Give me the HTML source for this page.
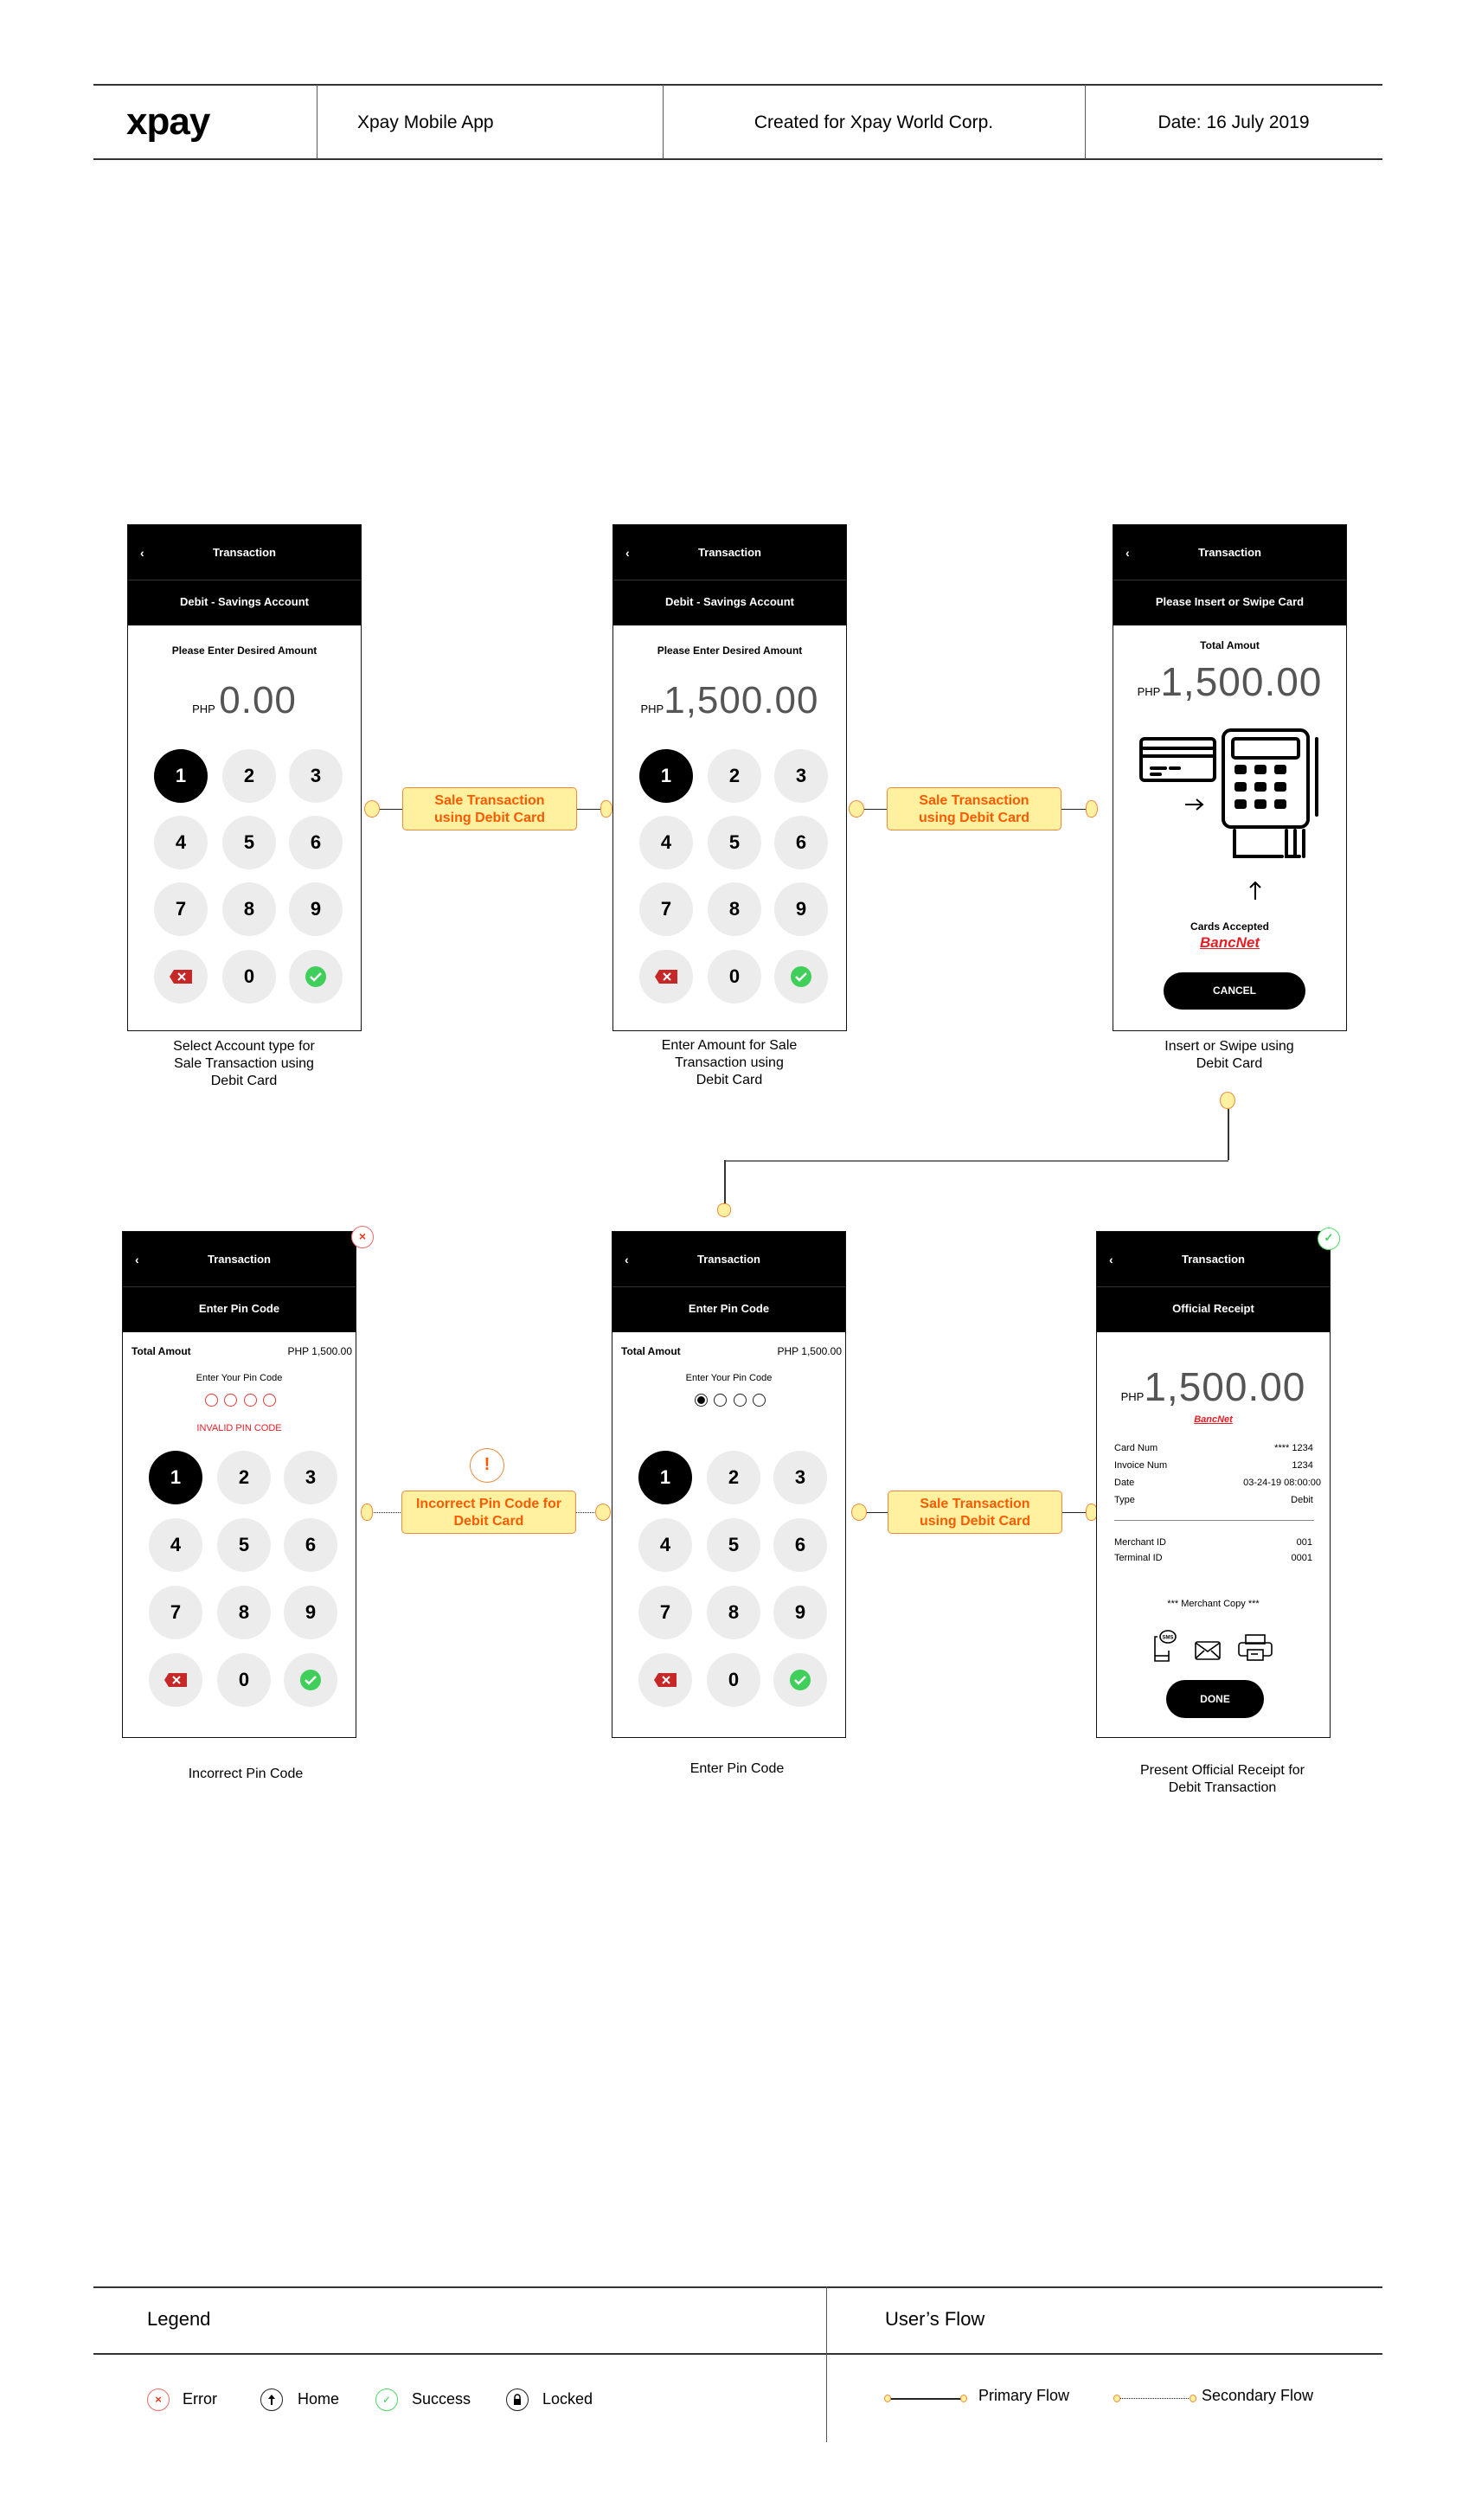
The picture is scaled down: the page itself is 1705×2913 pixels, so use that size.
<!DOCTYPE html>
<html><head><meta charset="utf-8">
<style>
*{box-sizing:border-box;margin:0;padding:0}
body{width:1705px;height:2913px;background:#fff;position:relative;font-family:"Liberation Sans",sans-serif;color:#000;overflow:hidden}
.a{position:absolute}
.hl{position:absolute;height:2px;background:#333}
.vl{position:absolute;width:1px;background:#555}
.ph{position:absolute;width:271px;height:586px;border:1.5px solid #111;background:#fff;overflow:hidden}
.tb{position:absolute;left:0;top:0;width:100%;height:64px;background:#000;color:#fff;font-weight:bold;font-size:13px;text-align:center;line-height:64px;border-bottom:1px solid #333}
.tb i{position:absolute;left:14px;top:0;font-style:normal;font-size:14px}
.sb{position:absolute;left:0;top:64px;width:100%;height:52px;background:#000;color:#fff;font-weight:bold;font-size:13px;text-align:center;line-height:50px}
.c{position:absolute;left:0;width:100%;text-align:center}
.k{position:absolute;width:62px;height:62px;margin:-31px 0 0 -31px;border-radius:50%;background:#ececec;font-weight:bold;font-size:22px;display:flex;align-items:center;justify-content:center}
.k.b{background:#000;color:#fff}
.lbl{position:absolute;width:300px;text-align:center;font-size:16px;line-height:20px}
.box{position:absolute;width:202px;height:50px;background:#fff1a0;border:1.5px solid #f08a3a;border-radius:5px;color:#ff5a00;font-size:16px;font-weight:bold;text-align:center;line-height:20px;padding-top:5px}
.dot{position:absolute;width:18px;height:20px;border-radius:50%;background:#fff1a0;border:1.5px solid #f08a3a;margin:-10px 0 0 -9px}
.ln{position:absolute;height:1px;background:#222}
.dl{position:absolute;height:0;border-top:1.5px dotted #222}
.pin{position:absolute;width:15px;height:15px;border-radius:50%;border:1.2px solid #e53935;margin:-7px 0 0 -7px}
.pb{border-color:#222}
.sm{font-size:12px}
.amt{font-size:44px;color:#555;letter-spacing:1px}
</style></head><body>

<div class="hl" style="left:108px;top:97px;width:1490px"></div>
<div class="hl" style="left:108px;top:183px;width:1490px"></div>
<div class="vl" style="left:366px;top:98px;height:86px"></div>
<div class="vl" style="left:766px;top:98px;height:86px"></div>
<div class="vl" style="left:1254px;top:98px;height:86px"></div>
<div class="a" style="left:146px;top:116px;font-size:44px;font-weight:bold;letter-spacing:-1px">xpay</div>
<div class="a" style="left:413px;top:130px;font-size:21px">Xpay Mobile App</div>
<div class="a" style="left:766px;width:488px;top:130px;font-size:21px;text-align:center">Created for Xpay World Corp.</div>
<div class="a" style="left:1254px;width:344px;top:130px;font-size:21px;text-align:center">Date: 16 July 2019</div>

<!-- PHONE 1 -->
<div class="ph" style="left:147px;top:606px">
 <div class="tb"><i>&lsaquo;</i>Transaction</div>
 <div class="sb">Debit - Savings Account</div>
 <div class="c sm" style="top:138px;font-weight:bold">Please Enter Desired Amount</div>
 <div class="c" style="top:178px"><span style="font-size:13px">PHP</span> <span class="amt">0.00</span></div>
 <div class="k b" style="left:61px;top:290px">1</div><div class="k" style="left:140px;top:290px">2</div><div class="k" style="left:217px;top:290px">3</div>
 <div class="k" style="left:61px;top:367px">4</div><div class="k" style="left:140px;top:367px">5</div><div class="k" style="left:217px;top:367px">6</div>
 <div class="k" style="left:61px;top:444px">7</div><div class="k" style="left:140px;top:444px">8</div><div class="k" style="left:217px;top:444px">9</div>
 <div class="k" style="left:61px;top:522px"><svg width="28" height="18"><path d="M6 1H27V17H6L1 9Z" fill="#c62828"/><path d="M11 5l8 8M19 5l-8 8" stroke="#fff" stroke-width="2"/></svg></div>
 <div class="k" style="left:140px;top:522px">0</div>
 <div class="k" style="left:217px;top:522px"><svg width="26" height="26"><circle cx="13" cy="13" r="12" fill="#3fcf5a"/><path d="M7 13l4 4 8-8" stroke="#fff" stroke-width="2.5" fill="none"/></svg></div>
</div>
<div class="lbl" style="left:132px;top:1200px">Select Account type for<br>Sale Transaction using<br>Debit Card</div>

<div class="ln" style="left:430px;top:935px;width:275px"></div>
<div class="dot" style="left:430px;top:935px"></div>
<div class="dot" style="left:703px;top:935px;border-radius:50% 60% 60% 50%;width:14px"></div>
<div class="box" style="left:465px;top:910px">Sale Transaction<br>using Debit Card</div>

<!-- PHONE 2 -->
<div class="ph" style="left:708px;top:606px">
 <div class="tb"><i>&lsaquo;</i>Transaction</div>
 <div class="sb">Debit - Savings Account</div>
 <div class="c sm" style="top:138px;font-weight:bold">Please Enter Desired Amount</div>
 <div class="c" style="top:178px"><span style="font-size:13px">PHP</span><span class="amt">1,500.00</span></div>
 <div class="k b" style="left:61px;top:290px">1</div><div class="k" style="left:140px;top:290px">2</div><div class="k" style="left:217px;top:290px">3</div>
 <div class="k" style="left:61px;top:367px">4</div><div class="k" style="left:140px;top:367px">5</div><div class="k" style="left:217px;top:367px">6</div>
 <div class="k" style="left:61px;top:444px">7</div><div class="k" style="left:140px;top:444px">8</div><div class="k" style="left:217px;top:444px">9</div>
 <div class="k" style="left:61px;top:522px"><svg width="28" height="18"><path d="M6 1H27V17H6L1 9Z" fill="#c62828"/><path d="M11 5l8 8M19 5l-8 8" stroke="#fff" stroke-width="2"/></svg></div>
 <div class="k" style="left:140px;top:522px">0</div>
 <div class="k" style="left:217px;top:522px"><svg width="26" height="26"><circle cx="13" cy="13" r="12" fill="#3fcf5a"/><path d="M7 13l4 4 8-8" stroke="#fff" stroke-width="2.5" fill="none"/></svg></div>
</div>
<div class="lbl" style="left:693px;top:1199px">Enter Amount for Sale<br>Transaction using<br>Debit Card</div>

<div class="ln" style="left:990px;top:935px;width:275px"></div>
<div class="dot" style="left:990px;top:935px"></div>
<div class="dot" style="left:1264px;top:935px;border-radius:50% 60% 60% 50%;width:14px"></div>
<div class="box" style="left:1025px;top:910px">Sale Transaction<br>using Debit Card</div>

<!-- PHONE 3 -->
<div class="ph" style="left:1286px;top:606px">
 <div class="tb"><i>&lsaquo;</i>Transaction</div>
 <div class="sb">Please Insert or Swipe Card</div>
 <div class="c sm" style="top:132px;font-weight:bold">Total Amout</div>
 <div class="c" style="top:154px"><span style="font-size:13px">PHP</span><span class="amt" style="font-size:46px">1,500.00</span></div>
 <svg class="a" style="left:0;top:225px" width="271" height="215" viewBox="0 0 271 215">
  <g fill="none" stroke="#000" stroke-width="4" stroke-linecap="round">
   <rect x="32" y="22" width="85" height="48" rx="4"/><line x1="32" y1="33" x2="117" y2="33"/><line x1="32" y1="42" x2="117" y2="42"/>
   <line x1="44" y1="56" x2="60" y2="56"/><line x1="66" y1="56" x2="76" y2="56"/><line x1="44" y1="63" x2="54" y2="63"/>
   <rect x="127" y="12" width="98" height="112" rx="9"/><rect x="138" y="22" width="76" height="22" rx="3"/>
   <line x1="235" y1="22" x2="235" y2="110"/>
   <path d="M140 128v30h55M200 128v30h15M210 128v30M220 128v30" />
  </g>
  <g fill="#000"><rect x="140" y="52" width="14" height="11" rx="3"/><rect x="163" y="52" width="14" height="11" rx="3"/><rect x="186" y="52" width="14" height="11" rx="3"/>
   <rect x="140" y="72" width="14" height="11" rx="3"/><rect x="163" y="72" width="14" height="11" rx="3"/><rect x="186" y="72" width="14" height="11" rx="3"/>
   <rect x="140" y="92" width="14" height="11" rx="3"/><rect x="163" y="92" width="14" height="11" rx="3"/><rect x="186" y="92" width="14" height="11" rx="3"/></g>
  <path d="M83 98h20M96 92l7 6-7 6" stroke="#000" stroke-width="2" fill="none"/>
  <path d="M164 208v-20M158 194l6-6 6 6" stroke="#000" stroke-width="2" fill="none"/>
 </svg>
 <div class="c sm" style="top:457px;font-weight:bold">Cards Accepted</div>
 <div class="c" style="top:473px;color:#e51e25;font-weight:bold;font-style:italic;font-size:17px;text-decoration:underline">BancNet</div>
 <div class="a" style="left:58px;top:517px;width:164px;height:43px;border-radius:22px;background:#000;color:#fff;font-size:12px;font-weight:bold;text-align:center;line-height:43px">CANCEL</div>
</div>
<div class="lbl" style="left:1271px;top:1200px">Insert or Swipe using<br>Debit Card</div>

<div class="a" style="left:1419px;top:1281px;width:1.5px;height:60px;background:#333"></div>
<div class="ln" style="left:837px;top:1341px;width:583px;background:#777;height:2px"></div>
<div class="a" style="left:837px;top:1341px;width:1.5px;height:58px;background:#333"></div>
<div class="dot" style="left:1419px;top:1272px"></div>
<div class="dot" style="left:838px;top:1401px;width:16px;height:16px;border-radius:50% 50% 60% 60%"></div>

<!-- PHONE 4 -->
<div class="a" style="left:406px;top:1417px;width:26px;height:26px;border-radius:50%;border:1.5px solid #f06a6a;background:#fff;color:#e53b1b;font-size:14px;font-weight:bold;text-align:center;line-height:22px;z-index:2">×</div>
<div class="ph" style="left:141px;top:1423px">
 <div class="tb"><i>&lsaquo;</i>Transaction</div>
 <div class="sb">Enter Pin Code</div>
 <div class="a sm" style="left:10px;top:131px;font-weight:bold">Total Amout</div>
 <div class="a sm" style="right:4px;top:131px">PHP 1,500.00</div>
 <div class="c" style="top:163px;font-size:11px">Enter Your Pin Code</div>
 <div class="pin" style="left:102px;top:194px"></div><div class="pin" style="left:124px;top:194px"></div><div class="pin" style="left:147px;top:194px"></div><div class="pin" style="left:169px;top:194px"></div>
 <div class="c" style="top:221px;font-size:11px;color:#e51e25">INVALID PIN CODE</div>
 <div class="k b" style="left:61px;top:284px">1</div><div class="k" style="left:140px;top:284px">2</div><div class="k" style="left:217px;top:284px">3</div>
 <div class="k" style="left:61px;top:362px">4</div><div class="k" style="left:140px;top:362px">5</div><div class="k" style="left:217px;top:362px">6</div>
 <div class="k" style="left:61px;top:440px">7</div><div class="k" style="left:140px;top:440px">8</div><div class="k" style="left:217px;top:440px">9</div>
 <div class="k" style="left:61px;top:518px"><svg width="28" height="18"><path d="M6 1H27V17H6L1 9Z" fill="#c62828"/><path d="M11 5l8 8M19 5l-8 8" stroke="#fff" stroke-width="2"/></svg></div>
 <div class="k" style="left:140px;top:518px">0</div>
 <div class="k" style="left:217px;top:518px"><svg width="26" height="26"><circle cx="13" cy="13" r="12" fill="#3fcf5a"/><path d="M7 13l4 4 8-8" stroke="#fff" stroke-width="2.5" fill="none"/></svg></div>
</div>
<div class="lbl" style="left:134px;top:2041px">Incorrect Pin Code</div>

<div class="dl" style="left:424px;top:1748px;width:273px"></div>
<div class="dot" style="left:426px;top:1748px;width:14px;border-radius:60% 50% 50% 60%"></div>
<div class="dot" style="left:697px;top:1748px"></div>
<div class="a" style="left:543px;top:1674px;width:40px;height:40px;border-radius:50%;border:1.5px solid #f08a3a;background:#fff;color:#ff5a00;font-weight:bold;font-size:20px;text-align:center;line-height:37px">!</div>
<div class="box" style="left:464px;top:1723px">Incorrect Pin Code for<br>Debit Card</div>

<!-- PHONE 5 -->
<div class="ph" style="left:707px;top:1423px">
 <div class="tb"><i>&lsaquo;</i>Transaction</div>
 <div class="sb">Enter Pin Code</div>
 <div class="a sm" style="left:10px;top:131px;font-weight:bold">Total Amout</div>
 <div class="a sm" style="right:4px;top:131px">PHP 1,500.00</div>
 <div class="c" style="top:163px;font-size:11px">Enter Your Pin Code</div>
 <div class="pin pb" style="left:102px;top:194px;background:radial-gradient(circle,#000 45%,#fff 50%)"></div><div class="pin pb" style="left:124px;top:194px"></div><div class="pin pb" style="left:147px;top:194px"></div><div class="pin pb" style="left:169px;top:194px"></div>
 <div class="k b" style="left:61px;top:284px">1</div><div class="k" style="left:140px;top:284px">2</div><div class="k" style="left:217px;top:284px">3</div>
 <div class="k" style="left:61px;top:362px">4</div><div class="k" style="left:140px;top:362px">5</div><div class="k" style="left:217px;top:362px">6</div>
 <div class="k" style="left:61px;top:440px">7</div><div class="k" style="left:140px;top:440px">8</div><div class="k" style="left:217px;top:440px">9</div>
 <div class="k" style="left:61px;top:518px"><svg width="28" height="18"><path d="M6 1H27V17H6L1 9Z" fill="#c62828"/><path d="M11 5l8 8M19 5l-8 8" stroke="#fff" stroke-width="2"/></svg></div>
 <div class="k" style="left:140px;top:518px">0</div>
 <div class="k" style="left:217px;top:518px"><svg width="26" height="26"><circle cx="13" cy="13" r="12" fill="#3fcf5a"/><path d="M7 13l4 4 8-8" stroke="#fff" stroke-width="2.5" fill="none"/></svg></div>
</div>
<div class="lbl" style="left:702px;top:2035px">Enter Pin Code</div>

<div class="ln" style="left:993px;top:1748px;width:273px"></div>
<div class="dot" style="left:993px;top:1748px"></div>
<div class="dot" style="left:1264px;top:1748px;border-radius:50% 60% 60% 50%;width:14px"></div>
<div class="box" style="left:1026px;top:1723px">Sale Transaction<br>using Debit Card</div>

<!-- PHONE 6 -->
<div class="a" style="left:1523px;top:1419px;width:26px;height:26px;border-radius:50%;border:1.5px solid #4cd964;background:#fff;color:#3fcf5a;font-size:13px;font-weight:bold;text-align:center;line-height:22px;z-index:2">✓</div>
<div class="ph" style="left:1267px;top:1423px">
 <div class="tb"><i>&lsaquo;</i>Transaction</div>
 <div class="sb">Official Receipt</div>
 <div class="c" style="top:152px"><span style="font-size:13px">PHP</span><span class="amt" style="font-size:46px">1,500.00</span></div>
 <div class="c" style="top:211px;color:#e51e25;font-weight:bold;font-style:italic;font-size:11px;text-decoration:underline">BancNet</div>
 <div class="a" style="left:20px;top:240px;font-size:11px;line-height:20px">Card Num<br>Invoice Num<br>Date<br>Type</div>
 <div class="a" style="right:10px;top:240px;font-size:11px;line-height:20px;text-align:right;white-space:nowrap">**** 1234&nbsp;&nbsp;&nbsp;<br>1234&nbsp;&nbsp;&nbsp;<br>03-24-19 08:00:00<br>Debit&nbsp;&nbsp;&nbsp;</div>
 <div class="a" style="left:20px;top:333px;width:231px;height:1px;background:#888"></div>
 <div class="a" style="left:20px;top:350px;font-size:11px;line-height:18px">Merchant ID<br>Terminal ID</div>
 <div class="a" style="right:20px;top:350px;font-size:11px;line-height:18px;text-align:right">001<br>0001</div>
 <div class="c" style="top:424px;font-size:11px">*** Merchant Copy ***</div>
 <svg class="a" style="left:60px;top:458px" width="160" height="40" viewBox="0 0 160 40">
  <g fill="none" stroke="#000" stroke-width="1.6">
   <path d="M10 10h-3v28h16v-12"/><line x1="7" y1="32" x2="23" y2="32"/>
   <ellipse cx="22" cy="10" rx="9" ry="7"/><text x="22" y="12.5" font-size="6" text-anchor="middle" stroke="none" fill="#000" font-family="Liberation Sans" font-weight="bold">SMS</text>
   <rect x="54" y="16" width="28" height="20" rx="2"/><path d="M54 17l14 10 14-10M54 35l10-9M82 35l-10-9"/>
   <rect x="112" y="8" width="22" height="10"/><rect x="104" y="17" width="38" height="15" rx="3"/><rect x="114" y="25" width="18" height="12" fill="#fff"/><line x1="118" y1="30" x2="126" y2="30"/>
  </g>
 </svg>
 <div class="a" style="left:80px;top:518px;width:113px;height:44px;border-radius:22px;background:#000;color:#fff;font-size:12px;font-weight:bold;text-align:center;line-height:44px">DONE</div>
</div>
<div class="lbl" style="left:1263px;top:2037px">Present Official Receipt for<br>Debit Transaction</div>

<!-- legend -->
<div class="hl" style="left:108px;top:2643px;width:1490px"></div>
<div class="hl" style="left:108px;top:2720px;width:1490px"></div>
<div class="vl" style="left:955px;top:2643px;height:180px"></div>
<div class="a" style="left:170px;top:2668px;font-size:22px">Legend</div>
<div class="a" style="left:1023px;top:2668px;font-size:22px">User’s Flow</div>

<div class="a" style="left:170px;top:2761px;width:26px;height:26px;border-radius:50%;border:1px solid #f06a6a;color:#e53b1b;font-size:13px;font-weight:bold;text-align:center;line-height:24px">×</div>
<div class="a" style="left:211px;top:2763px;font-size:18px">Error</div>
<div class="a" style="left:301px;top:2761px;width:26px;height:26px;border-radius:50%;border:1px solid #222;text-align:center"><svg width="24" height="24"><path d="M12 6l-4 5h3v7h2v-7h3z" fill="#000"/></svg></div>
<div class="a" style="left:344px;top:2763px;font-size:18px">Home</div>
<div class="a" style="left:434px;top:2761px;width:26px;height:26px;border-radius:50%;border:1px solid #4cd964;color:#3fcf5a;font-size:12px;text-align:center;line-height:24px">✓</div>
<div class="a" style="left:476px;top:2763px;font-size:18px">Success</div>
<div class="a" style="left:585px;top:2761px;width:26px;height:26px;border-radius:50%;border:1px solid #222"><svg width="24" height="24"><path d="M9 11V9a3 3 0 0 1 6 0v2" stroke="#000" stroke-width="1.5" fill="none"/><rect x="8" y="11" width="8" height="7" fill="#000"/></svg></div>
<div class="a" style="left:627px;top:2763px;font-size:18px">Locked</div>

<div class="ln" style="left:1027px;top:2772px;width:86px;height:2px"></div>
<div class="a" style="left:1022px;top:2768px;width:8px;height:9px;border-radius:50%;background:#fff1a0;border:1px solid #f08a3a"></div>
<div class="a" style="left:1110px;top:2768px;width:8px;height:9px;border-radius:50%;background:#fff1a0;border:1px solid #f08a3a"></div>
<div class="a" style="left:1131px;top:2759px;font-size:18px">Primary Flow</div>
<div class="dl" style="left:1292px;top:2772px;width:86px"></div>
<div class="a" style="left:1287px;top:2768px;width:8px;height:9px;border-radius:50%;background:#fff1a0;border:1px solid #f08a3a"></div>
<div class="a" style="left:1375px;top:2768px;width:8px;height:9px;border-radius:50%;background:#fff1a0;border:1px solid #f08a3a"></div>
<div class="a" style="left:1389px;top:2759px;font-size:18px">Secondary Flow</div>

</body></html>
